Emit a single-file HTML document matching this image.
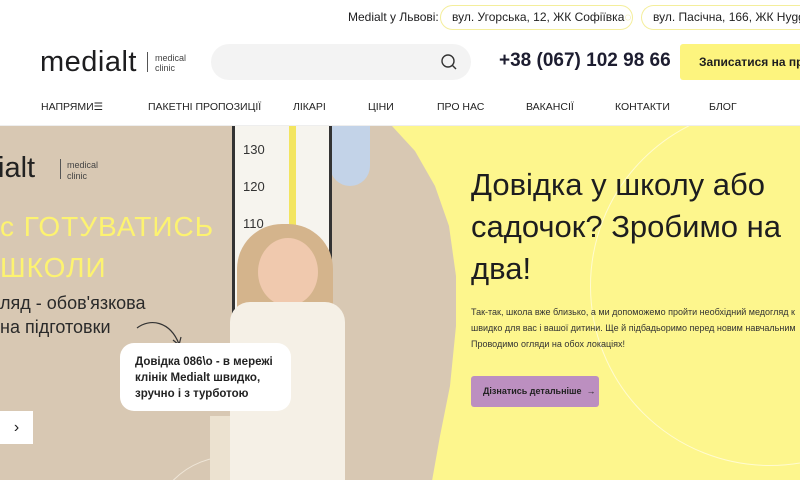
<!DOCTYPE html>
<html><head><meta charset="utf-8"><style>
*{margin:0;padding:0;box-sizing:border-box}
html,body{width:800px;height:480px;overflow:hidden}
body{background:#fff;font-family:"Liberation Sans","Noto Sans CJK SC",sans-serif;color:#1d1d1f;position:relative}
.a{position:absolute}
.pill{position:absolute;top:5px;height:25px;border:1px solid #f4ee9c;border-radius:13px;font-size:12px;line-height:23px;padding:0 11px;color:#222;white-space:nowrap;overflow:hidden}
.nav{position:absolute;top:101px;font-size:10.5px;color:#222}
</style></head><body>
<div class="a" style="left:348px;top:10px;font-size:12px">Medialt у Львові:</div>
<div class="pill" style="left:440px;width:193px">вул. Угорська, 12, ЖК Софіївка<span style="color:#e8df7a">◌</span></div>
<div class="pill" style="left:641px;width:159px;border-right:none;border-radius:13px 0 0 13px">вул. Пасічна, 166, ЖК Hygge</div>

<div class="a" style="left:40px;top:46px;font-size:29px;letter-spacing:0.5px;font-weight:300">medialt</div>
<div class="a" style="left:147px;top:52px;width:1px;height:20px;background:#555"></div>
<div class="a" style="left:155px;top:53px;font-size:9px;line-height:10px;color:#444">medical<br>clinic</div>

<div class="a" style="left:211px;top:44px;width:260px;height:36px;border-radius:18px;background:#f3f3f3"></div>
<svg class="a" style="left:440px;top:53px" width="18" height="18" viewBox="0 0 18 18"><circle cx="8" cy="8" r="6" fill="none" stroke="#333" stroke-width="1.4"/><path d="M12.5 12.5L16 16" stroke="#333" stroke-width="1.4"/></svg>
<div class="a" style="left:499px;top:50px;font-size:19px;font-weight:bold;color:#1d1d30">+38 (067) 102 98 66</div>
<div class="a" style="left:680px;top:44px;width:120px;height:36px;background:#fdf47e;border-radius:3px 0 0 3px;font-size:12px;font-weight:bold;line-height:36px;padding-left:19px;white-space:nowrap;overflow:hidden">Записатися на прийом</div>

<div class="nav" style="left:41px">НАПРЯМИ☰</div>
<div class="nav" style="left:148px">ПАКЕТНІ ПРОПОЗИЦІЇ</div>
<div class="nav" style="left:293px">ЛІКАРІ</div>
<div class="nav" style="left:368px">ЦІНИ</div>
<div class="nav" style="left:437px">ПРО НАС</div>
<div class="nav" style="left:526px">ВАКАНСІЇ</div>
<div class="nav" style="left:615px">КОНТАКТИ</div>
<div class="nav" style="left:709px">БЛОГ</div>

<div class="a" style="left:0;top:125px;width:800px;height:355px;background:#fdf68d;overflow:hidden;border-top:1px solid #eee">
 <div class="a" style="left:590px;top:-20px;width:360px;height:360px;border:1px solid #fffbd0;border-radius:50%"></div>
 <div class="a" style="left:0;top:0;width:460px;height:355px;background:#d8c8b3;overflow:hidden;clip-path:polygon(0 0,392px 0,415px 25px,435px 60px,449px 100px,456px 150px,456px 200px,450px 260px,440px 310px,432px 355px,0 355px)">
   <div class="a" style="left:150px;top:330px;width:160px;height:160px;border:1px solid #efe6d8;border-radius:50%"></div>
   <div class="a" style="left:330px;top:0;width:40px;height:60px;background:#c3d3e8;border-radius:0 0 20px 20px"></div>
   <div class="a" style="left:232px;top:0;width:100px;height:190px;background:#f6f4ee;border-left:3px solid #333;border-right:3px solid #333"></div>
   <div class="a" style="left:289px;top:0;width:7px;height:150px;background:#f3e560"></div>
   <div class="a" style="left:243px;top:16px;font-size:13px;color:#333">130</div>
   <div class="a" style="left:243px;top:53px;font-size:13px;color:#333">120</div>
   <div class="a" style="left:243px;top:90px;font-size:13px;color:#333">110</div>
   <div class="a" style="left:237px;top:98px;width:96px;height:130px;background:#d4b48c;border-radius:45px 45px 20px 20px"></div>
   <div class="a" style="left:258px;top:112px;width:60px;height:68px;background:#f0c9ae;border-radius:50%"></div>
   <div class="a" style="left:230px;top:176px;width:115px;height:179px;background:#f5f0e6;border-radius:20px 20px 0 0"></div>
   <div class="a" style="left:210px;top:290px;width:20px;height:65px;background:#ece2d0"></div>
   <div class="a" style="left:-2px;top:26px;font-size:29px;color:#222;font-weight:300">ialt</div>
   <div class="a" style="left:60px;top:33px;width:1px;height:20px;background:#555"></div>
   <div class="a" style="left:67px;top:34px;font-size:9px;line-height:11px;color:#444">medical<br>clinic</div>
   <div class="a" style="left:0;top:80px;font-size:28px;line-height:41px;color:#fdf370;letter-spacing:1px;white-space:nowrap">с ГОТУВАТИСЬ<br>ШКОЛИ</div>
   <div class="a" style="left:0;top:165px;font-size:18px;line-height:24px;color:#2a2a2a;white-space:nowrap">ляд - обов'язкова<br>на підготовки</div>
   <svg class="a" style="left:135px;top:190px" width="50" height="35" viewBox="0 0 50 35"><path d="M2 12 C15 2 35 5 44 28" fill="none" stroke="#333" stroke-width="1.2"/><path d="M38 24 L44 29 L46 21" fill="none" stroke="#333" stroke-width="1.2"/></svg>
   <div class="a" style="left:120px;top:217px;width:171px;height:68px;background:#fff;border-radius:14px;font-size:11.5px;font-weight:bold;line-height:16px;padding:11px 15px;color:#222;white-space:nowrap">Довідка 086\о - в мережі<br>клінік Medialt швидко,<br>зручно і з турботою</div>
   <div class="a" style="left:0;top:285px;width:33px;height:33px;background:#fff;font-size:16px;line-height:33px;text-align:center">›</div>
 </div>
 <div class="a" style="left:471px;top:38px;font-size:31px;line-height:42px;color:#1d1d1f;white-space:nowrap">Довідка у школу або<br>садочок? Зробимо на<br>два!</div>
 <div class="a" style="left:471px;top:178px;font-size:9px;line-height:16px;color:#333;white-space:nowrap">Так-так, школа вже близько, а ми допоможемо пройти необхідний медогляд к<br>швидко для вас і вашої дитини. Ще й підбадьоримо перед новим навчальним<br>Проводимо огляди на обох локаціях!</div>
 <div class="a" style="left:471px;top:250px;width:128px;height:31px;background:#bc8fc0;border-radius:3px;font-size:9px;font-weight:bold;line-height:31px;padding-left:12px;color:#222;white-space:nowrap">Дізнатись детальніше &nbsp;→</div>
</div>
</body></html>
